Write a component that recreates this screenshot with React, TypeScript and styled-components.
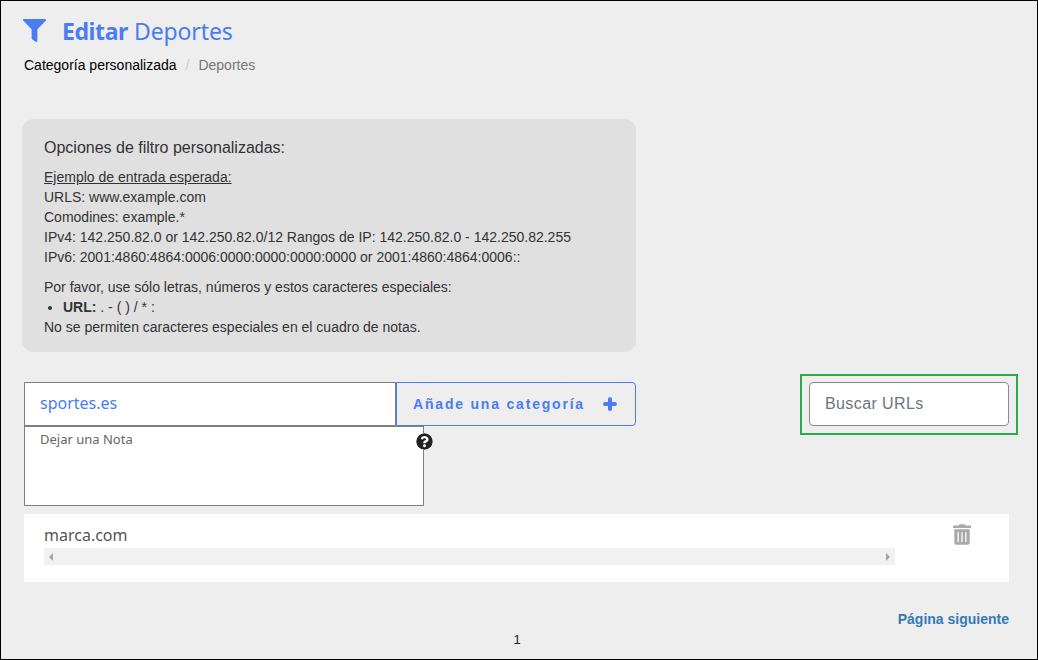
import React from "react";
import styled, { createGlobalStyle } from "styled-components";
import { FaFilter, FaPlus, FaQuestionCircle, FaTrashAlt } from "react-icons/fa";

const Global = createGlobalStyle`
  html, body { margin: 0; padding: 0; background: #eee; }
  * { box-sizing: border-box; }
  body { font-family: "Liberation Sans", Arial, sans-serif; }
`;

const Frame = styled.div`
  width: 1038px;
  height: 660px;
  border: 1px solid #000;
  background: #eee;
  overflow: hidden;
  padding: 0 28px 0 21px;
  color: #333;
  font-size: 14px;
`;
const TitleRow = styled.h1`
  display: flex;
  align-items: center;
  margin: 0;
  padding: 14px 0 0 1px;
  height: 46px;
  font: 400 23px/32px "Noto Sans", "Open Sans", sans-serif;
  letter-spacing: -0.1px;
  color: #4a7cf6;
`;
const FilterIcon = styled(FaFilter)`
  width: 23px;
  height: 23px;
  margin-right: 16px;
  margin-top: -1px;
`;
const TitleStrong = styled.strong`
  font-weight: 700;
  margin-right: 6px;
  letter-spacing: -0.4px;
`;
const Crumbs = styled.nav`
  display: flex;
  margin: 9px 0 0 2px;
  font-size: 14px;
  line-height: 18px;
  color: #000;
`;
const Sep = styled.span`
  color: #ccc;
  margin: 0 9px;
`;
const Current = styled.span`
  color: #777;
`;
const Card = styled.section`
  width: 614px;
  height: 233px;
  margin-top: 45px;
  background: #e0e0e0;
  border-radius: 12px;
  padding: 19px 22px;
`;
const CardTitle = styled.h2`
  margin: 0 0 9px;
  font-size: 16px;
  line-height: 20px;
  font-weight: 400;
  color: #333;
`;
const Para = styled.p`
  margin: 0 0 10px;
  line-height: 20px;
`;
const Under = styled.span`
  text-decoration: underline;
`;
const Bullets = styled.ul`
  margin: 0;
  padding-left: 19px;
  line-height: 20px;
`;
const Tail = styled.div`
  line-height: 20px;
`;
const Tools = styled.div`
  display: flex;
  justify-content: space-between;
  align-items: flex-start;
  margin-top: 22px;
`;
const Left = styled.div`
  margin: 8px 0 0 2px;
  width: 612px;
`;
const AddRow = styled.div`
  display: flex;
  height: 44px;
`;
const UrlInput = styled.input`
  width: 372px;
  height: 44px;
  border: 1px solid #808080;
  background: #fff;
  padding: 0 15px 2px;
  font: 400 16px "Noto Sans", "Open Sans", sans-serif;
  color: #4a7cf6;
  outline: none;
`;
const AddBtn = styled.button`
  width: 240px;
  height: 44px;
  display: flex;
  align-items: center;
  justify-content: center;
  gap: 18px;
  padding: 0 2px 0 0;
  background: #eee;
  border: 1px solid #4a7cf6;
  border-radius: 0 4px 4px 0;
  color: #4a7cf6;
  font: 700 14px "Liberation Sans", Arial, sans-serif;
  letter-spacing: 1.8px;
`;
const PlusIcon = styled(FaPlus)`
  width: 14px;
  height: 14px;
  stroke: currentColor;
  stroke-width: 50;
`;
const NoteWrap = styled.div`
  position: relative;
  width: 400px;
  height: 80px;
`;
const Note = styled.textarea`
  display: block;
  width: 100%;
  height: 100%;
  resize: none;
  border: 1px solid #808080;
  background: #fff;
  padding: 3px 15px;
  font: 400 13px "Noto Sans", "Open Sans", sans-serif;
  color: #666;
  outline: none;
  &::placeholder { color: #666; opacity: 1; }
`;
const Help = styled(FaQuestionCircle)`
  position: absolute;
  top: 7px;
  right: -9px;
  width: 17px;
  height: 17px;
  color: #222;
  background: #fff;
  border-radius: 50%;
`;
const SearchBox = styled.div`
  width: 218px;
  height: 61px;
  border: 2px solid #2ea84f;
  padding: 6px 7px;
  margin-right: -9px;
`;
const Search = styled.input`
  width: 200px;
  height: 44px;
  border: 1px solid #8a8a8a;
  border-radius: 4px;
  background: #fff;
  padding: 0 15px;
  font: 400 16px "Liberation Sans", Arial, sans-serif;
  letter-spacing: 0.4px;
  outline: none;
  &::placeholder { color: #6c757d; opacity: 1; }
`;
const Row = styled.div`
  display: flex;
  justify-content: space-between;
  width: 985px;
  height: 68px;
  margin: 8px 0 0 2px;
  background: #fff;
  padding: 10px 38px 0 20px;
`;
const RowMain = styled.div`
  width: 851px;
`;
const RowText = styled.div`
  font: 400 16px/22px "Noto Sans", "Open Sans", sans-serif;
  color: #555;
`;
const Scrollbar = styled.div`
  display: flex;
  justify-content: space-between;
  align-items: center;
  height: 17px;
  margin-top: 2px;
  background: #f1f1f1;
  padding: 0 5px;
`;
const Arrow = styled.i<{ $dir: "left" | "right" }>`
  width: 0;
  height: 0;
  border-top: 4px solid transparent;
  border-bottom: 4px solid transparent;
  ${(p) => (p.$dir === "left" ? "border-right: 4px solid #a3a3a3;" : "border-left: 4px solid #a3a3a3;")}
`;
const Trash = styled(FaTrashAlt)`
  width: 18px;
  height: 21px;
  color: #a9a9a9;
`;
const Next = styled.a`
  display: block;
  margin: 28px 0 0;
  width: 987px;
  text-align: right;
  font-size: 14px;
  line-height: 18px;
  font-weight: 700;
  color: #337ab7;
`;
const PageNum = styled.div`
  width: 990px;
  margin-top: 3px;
  text-align: center;
  font-size: 13px;
  line-height: 18px;
  color: #222;
`;

export default function App() {
  return (
    <>
      <Global />
      <Frame>
        <TitleRow>
          <FilterIcon />
          <TitleStrong>Editar</TitleStrong> Deportes
        </TitleRow>
        <Crumbs>
          Categoría personalizada<Sep>/</Sep><Current>Deportes</Current>
        </Crumbs>
        <Card>
          <CardTitle>Opciones de filtro personalizadas:</CardTitle>
          <Para>
            <Under>Ejemplo de entrada esperada:</Under><br />
            URLS: www.example.com<br />
            Comodines: example.*<br />
            IPv4: 142.250.82.0 or 142.250.82.0/12 Rangos de IP: 142.250.82.0 - 142.250.82.255<br />
            IPv6: 2001:4860:4864:0006:0000:0000:0000:0000 or 2001:4860:4864:0006::
          </Para>
          <Tail>Por favor, use sólo letras, números y estos caracteres especiales:</Tail>
          <Bullets>
            <li><strong>URL:</strong> . - ( ) / * :</li>
          </Bullets>
          <Tail>No se permiten caracteres especiales en el cuadro de notas.</Tail>
        </Card>
        <Tools>
          <Left>
            <AddRow>
              <UrlInput defaultValue="sportes.es" />
              <AddBtn>Añade una categoría <PlusIcon /></AddBtn>
            </AddRow>
            <NoteWrap>
              <Note placeholder="Dejar una Nota" />
              <Help />
            </NoteWrap>
          </Left>
          <SearchBox>
            <Search placeholder="Buscar URLs" />
          </SearchBox>
        </Tools>
        <Row>
          <RowMain>
            <RowText>marca.com</RowText>
            <Scrollbar>
              <Arrow $dir="left" />
              <Arrow $dir="right" />
            </Scrollbar>
          </RowMain>
          <Trash />
        </Row>
        <Next>Página siguiente</Next>
        <PageNum>1</PageNum>
      </Frame>
    </>
  );
}
